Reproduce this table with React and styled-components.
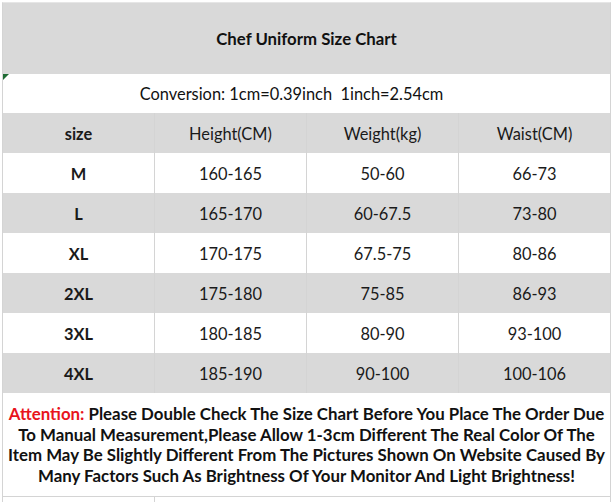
import React from "react";
import styled, { createGlobalStyle } from "styled-components";

const Global = createGlobalStyle`
  html, body { margin: 0; padding: 0; background: #fff; }
  body { font-family: Lato, "Open Sans", sans-serif; color: #111; }
`;

const Sheet = styled.div`
  width: 614px;
  height: 502px;
  overflow: hidden;
  padding: 2px 0 0 2px;
  box-sizing: border-box;
`;

const Table = styled.div`
  width: 609px;
  box-sizing: border-box;
  border-left: 1px solid #d4d4d4;
  border-right: 1px solid #d4d4d4;
  border-top: 1px solid #e6e6e6;
  display: flex;
  flex-direction: column;
`;

const Banner = styled.div`
  position: relative;
  height: ${(p) => p.$h}px;
  box-sizing: border-box;
  padding-right: ${(p) => p.$shift || 0}px;
  background: ${(p) => (p.$gray ? "#d9d9d9" : "#fff")};
  display: flex;
  align-items: center;
  justify-content: center;
  font-size: ${(p) => p.$size || 16}px;
  font-weight: ${(p) => (p.$bold ? 700 : 400)};
  color: #111;
`;

const Marker = styled.span`
  position: absolute;
  left: 0;
  top: 0;
  width: 0;
  height: 0;
  border-top: 6px solid #1f6b34;
  border-right: 6px solid transparent;
`;

const Row = styled.div`
  display: grid;
  grid-template-columns: 151px 152px 152px 152px;
  height: 40px;
  background: ${(p) => (p.$gray ? "#d9d9d9" : "#fff")};
`;

const Cell = styled.div`
  display: flex;
  align-items: center;
  justify-content: center;
  font-size: 16.4px;
  font-weight: ${(p) => (p.$bold ? 700 : 400)};
  color: #1a1a1a;
  & + & {
    border-left: 1px solid ${(p) => (p.$gray ? "#d9d9d9" : "#d4d4d4")};
  }
`;

const Notice = styled.div`
  height: 104px;
  box-sizing: border-box;
  padding: 11px 0 0;
  text-align: center;
  font-size: 16.85px;
  line-height: 20.6px;
  font-weight: 700;
  color: #111;
  white-space: nowrap;
  border-bottom: 1px solid #d4d4d4;
`;

const Red = styled.span`
  color: #e8141c;
`;

const Tail = styled.div`
  display: grid;
  grid-template-columns: 151px 456px;
  height: 10px;
  & > div + div { border-left: 1px solid #d4d4d4; }
`;

const rows = [
  ["M", "160-165", "50-60", "66-73"],
  ["L", "165-170", "60-67.5", "73-80"],
  ["XL", "170-175", "67.5-75", "80-86"],
  ["2XL", "175-180", "75-85", "86-93"],
  ["3XL", "180-185", "80-90", "93-100"],
  ["4XL", "185-190", "90-100", "100-106"],
];

export default function App() {
  return (
    <>
      <Global />
      <Sheet>
        <Table>
          <Banner $h={71} $gray $bold $size={16.8}>Chef Uniform Size Chart</Banner>
          <Banner $h={39} $size={16.4} $shift={30}>
            <Marker />
            Conversion: 1cm=0.39inch&nbsp; 1inch=2.54cm
          </Banner>
          <Row $gray>
            <Cell $gray $bold>size</Cell>
            <Cell $gray>Height(CM)</Cell>
            <Cell $gray>Weight(kg)</Cell>
            <Cell $gray>Waist(CM)</Cell>
          </Row>
          {rows.map((r, i) => {
            const gray = i % 2 === 1;
            return (
              <Row key={r[0]} $gray={gray}>
                <Cell $gray={gray} $bold>{r[0]}</Cell>
                <Cell $gray={gray}>{r[1]}</Cell>
                <Cell $gray={gray}>{r[2]}</Cell>
                <Cell $gray={gray}>{r[3]}</Cell>
              </Row>
            );
          })}
          <Notice>
            <Red>Attention:</Red> Please Double Check The Size Chart Before You Place The Order Due
            <br />
            To Manual Measurement,Please Allow 1-3cm Different The Real Color Of The
            <br />
            Item May Be Slightly Different From The Pictures Shown On Website Caused By
            <br />
            Many Factors Such As Brightness Of Your Monitor And Light Brightness!
          </Notice>
          <Tail>
            <div />
            <div />
          </Tail>
        </Table>
      </Sheet>
    </>
  );
}
